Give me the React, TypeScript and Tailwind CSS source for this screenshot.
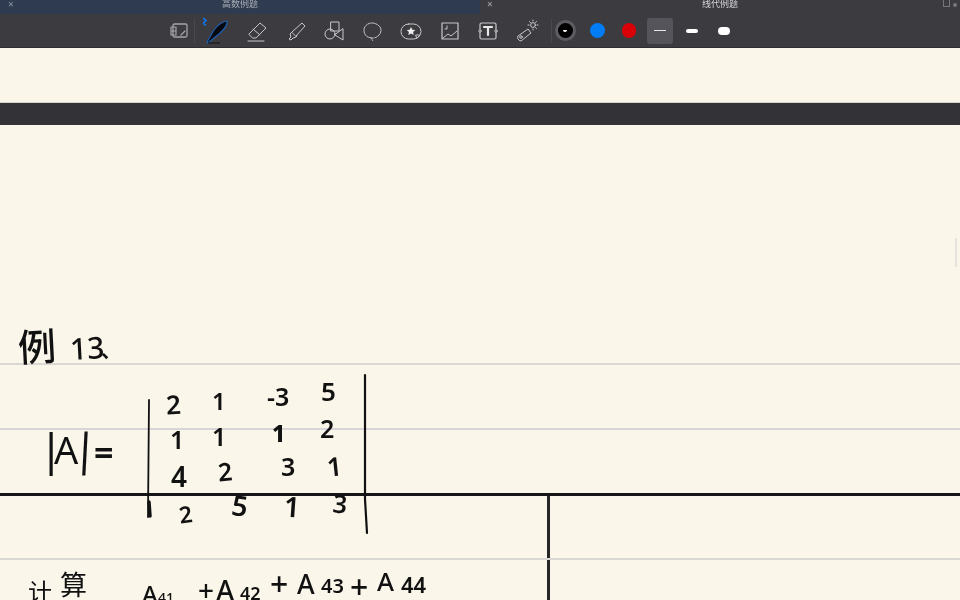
const Tool = ({ children, w = 24 }: { children: React.ReactNode; w?: number }) => (
  <svg width={w} height="24" viewBox="0 0 24 24" fill="none" stroke="#c8c8ca" strokeWidth="1" strokeLinecap="round" strokeLinejoin="round" className="shrink-0">
    {children}
  </svg>
);

const Ink = ({ c, x, y, s, r = 0, w = 600 }: { c: string; x: number; y: number; s: number; r?: number; w?: number }) => (
  <span
    className="absolute leading-none text-[#111] whitespace-pre font-['Noto_Sans','Noto_Sans_CJK_SC',sans-serif]"
    style={{ left: x, top: y - 1, fontSize: s, fontWeight: w, transform: `rotate(${r}deg)` }}
  >
    {c}
  </span>
);

export default function App() {
  const ink: [string, number, number, number, number?, number?][] = [
    ["例", 18, 203, 38, -3, 500],
    ["13", 70, 209, 30, -3, 500],
    ["、", 101, 217, 20, 0, 600],
    ["|", 39, 302, 44, 0, 400],
    ["A", 54, 306, 38, 0, 400],
    ["|", 73, 302, 44, 3, 400],
    ["=", 94, 311, 34, 0, 700],
    ["2", 166, 267, 26, -3],
    ["1", 212, 265, 24],
    ["-3", 267, 260, 25, 0],
    ["5", 321, 254, 26, 0],
    ["1", 170, 303, 25],
    ["1", 212, 300, 25],
    ["1", 272, 298, 23, 0, 800],
    ["2", 320, 292, 25],
    ["4", 171, 338, 28],
    ["2", 218, 335, 25, -5],
    ["3", 281, 330, 25],
    ["1", 327, 329, 26, -6],
    ["2", 179, 379, 23, -8],
    ["5", 232, 367, 28, 8],
    ["1", 284, 368, 28, 4],
    ["3", 333, 367, 25, 6],
    ["计", 28, 456, 24, 0, 400],
    ["算", 60, 447, 27, 0, 400],
    ["A", 142, 458, 24, 0, 500],
    ["41", 158, 467, 14, 0, 500],
    ["+", 198, 452, 28, 0, 500],
    ["A", 216, 452, 28, 0, 500],
    ["42", 240, 460, 18],
    ["+", 270, 444, 32, 0, 500],
    ["A", 297, 446, 27, 0, 500],
    ["43", 321, 452, 20],
    ["+", 350, 447, 32, 0, 500],
    ["A", 377, 444, 26, 0, 500],
    ["44", 401, 449, 22],
  ];
  return (
    <div className="w-[960px] h-[600px] overflow-hidden flex flex-col bg-[#faf6ea] blur-[0.4px] font-['Noto_Sans','Noto_Sans_CJK_SC',sans-serif]">
      <div className="h-[14px] flex shrink-0 text-[9px] leading-[8px] text-[#a9adb5]">
        <div className="w-[480px] bg-[#2f3b50] flex items-start relative">
          <span className="absolute left-[8px] top-0 text-[10px] text-[#8d94a1]">×</span>
          <span className="w-full text-center">高数例题</span>
        </div>
        <div className="w-[480px] bg-[#3c3b40] flex items-start relative text-[#d6d6d8]">
          <span className="absolute left-[7px] top-0 text-[10px] text-[#a9a9ac]">×</span>
          <span className="w-full text-center">线代例题</span>
          <span className="absolute right-[10px] top-0 w-[7px] h-[7px] border border-t-0 border-[#77777b]" />
          <span className="absolute right-[3px] top-[3px] w-[4px] h-[4px] rounded-full bg-[#77777b]" />
        </div>
      </div>

      <div className="h-[34px] bg-[#3c3b40] shrink-0 flex items-center pl-[166px] border-b border-[#2e2d31]">
        <Tool>
          <rect x="7" y="5" width="14" height="13" rx="1.5" stroke="#a5a5a8" strokeWidth="1.3" />
          <path d="M5 8h5v4H5zM5 12h5v4H5zM15 16l4-4" stroke="#a5a5a8" strokeWidth="1.2" />
        </Tool>
        <div className="w-px h-[24px] bg-[#4a494e] ml-[4px]" />
        <div className="ml-[8px]">
          <svg width="26" height="28" viewBox="0 0 26 28" className="block">
            <path d="M4 25 L11 13 Q17 5 24 4 Q25 9 17 16 L5 26 Z" fill="#05080d" stroke="#1f5fae" strokeWidth="1.2" strokeLinejoin="round" />
            <path d="M5 26h12" stroke="#111" strokeWidth="1" />
            <path d="M0 1l3 2.500-3 2.500 3 2.500" fill="none" stroke="#0a78f5" strokeWidth="1.6" />
          </svg>
        </div>
        <div className="ml-[16px] flex items-center gap-[14.5px]">
          <Tool>
            <path d="M4 15L15 4l6 5-10 10H8z" />
            <path d="M8 10l7 6M3 22h16" />
          </Tool>
          <Tool>
            <path d="M8 13l10-9 3 3-9 10zM8 13l-2 2 1 3-2 2 2 1 2-2 3-1 1-1" />
          </Tool>
          <Tool>
            <rect x="9" y="3" width="8" height="9" />
            <circle cx="8" cy="15" r="5" />
            <path d="M21 10v11l-8-5z" />
          </Tool>
          <Tool>
            <path d="M12 19c-6 0-9-3-9-8 0-4 4-7 8-7s9 3 9 7c0 4-3 7-7 8" strokeDasharray="2.500 1" />
            <path d="M10 19l2 3" strokeDasharray="1 1" />
          </Tool>
          <Tool>
            <rect x="2" y="5" width="20" height="15" rx="7.5" />
            <path d="M12 8l1.3 2.8 3 .3-2.2 2 .6 3-2.700-1.500-2.700 1.500.6-3-2.200-2 3-.3z" fill="#eee" stroke="none" />
            <path d="M17 16h4l-3 3z" fill="#3c3b40" />
          </Tool>
          <Tool>
            <rect x="4" y="4" width="16" height="16" strokeWidth="1.2" />
            <path d="M5 19l5-4 3 2 6-5M9 7v3H7" />
          </Tool>
          <Tool>
            <rect x="4" y="4" width="16" height="16" rx="1.5" strokeWidth="1.2" />
            <path d="M8 8h8M12 8v8" strokeWidth="2.2" stroke="#e8e8e8" />
            <circle cx="4" cy="12" r="1.2" fill="#3c3b40" />
            <circle cx="20" cy="12" r="1.2" fill="#3c3b40" />
          </Tool>
          <Tool>
            <path d="M3 17l10-7 3 4-10 8q-2 0-3-2z" />
            <circle cx="6" cy="18" r="1.3" />
            <circle cx="18" cy="6" r="2.4" />
            <path d="M18 1v1M18 10v1M13 6h1M22 6h1M14.500 2.500l1 1M20.500 8.500l1 1M21.500 2.500l-1 1" />
          </Tool>
        </div>
        <div className="w-px h-[24px] bg-[#4a494e] ml-[12px]" />
        <div className="ml-[3px] w-[21px] h-[21px] rounded-full bg-black border-[3px] border-[#5d5c61] flex items-center justify-center">
          <span className="w-[4px] h-[2px] rounded-b-full bg-white" />
        </div>
        <span className="ml-[14px] w-[15px] h-[15px] rounded-full bg-[#007cf7]" />
        <span className="ml-[17px] w-[14px] h-[15px] rounded-full bg-[#d90008]" />
        <div className="ml-[11px] w-[26px] h-[26px] rounded-[3px] bg-[#55545a] flex items-center justify-center">
          <span className="w-[12px] h-px bg-[#e4e4e4]" />
        </div>
        <span className="ml-[13px] w-[12px] h-[4px] rounded-full bg-white" />
        <span className="ml-[20px] w-[12px] h-[8px] rounded-full bg-white" />
      </div>

      <div className="h-[55px] shrink-0 border-b border-[#d5d3cb]" />
      <div className="h-[22px] shrink-0 bg-[#333237]" />

      <div className="relative flex-1 flex flex-col">
        <div className="h-[238px] shrink-0" />
        <div className="h-[65px] shrink-0 border-t-2 border-[#d9d8d4]" />
        <div className="h-[65px] shrink-0 border-t-2 border-[#d6d6d8]" />
        <div className="flex-1 flex flex-col border-t-[3px] border-[#171717]">
          <div className="h-[62px] shrink-0 flex">
            <div className="w-[550px] shrink-0 border-r-[3px] border-[#262626]" />
          </div>
          <div className="flex-1 flex border-t-2 border-[#d9d8d4]">
            <div className="w-[550px] shrink-0 border-r-[3px] border-[#262626]" />
          </div>
        </div>

        <span className="absolute right-[3px] top-[113px] w-[2px] h-[29px] bg-[#e5e3dc]" />

        {ink.map(([c, x, y, s, r, w], i) => (
          <Ink key={i} c={c} x={x} y={y} s={s} r={r} w={w} />
        ))}

        <svg className="absolute left-[140px] top-[244px]" width="235" height="170" viewBox="0 0 235 170" fill="none" stroke="#111" strokeLinecap="round">
          <path d="M9 31 L8 148" strokeWidth="1.8" />
          <path d="M9 133 L10 147" strokeWidth="3.5" />
          <path d="M225 6 L225 130 L227 164" strokeWidth="2.2" />
        </svg>
      </div>
    </div>
  );
}
